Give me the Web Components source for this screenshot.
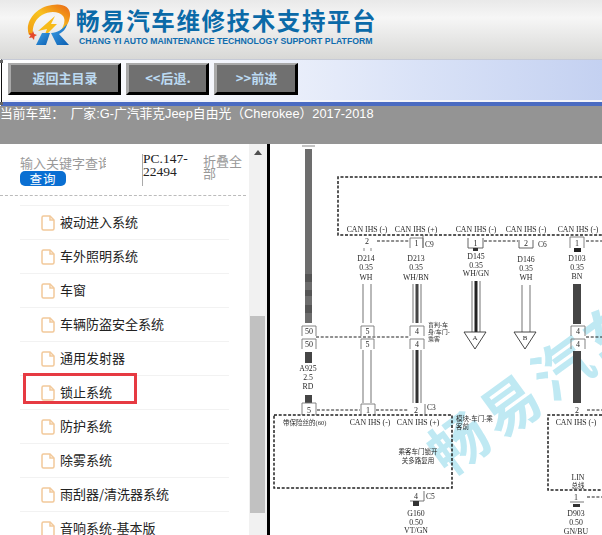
<!DOCTYPE html>
<html lang="zh"><head><meta charset="utf-8"><title>畅易汽车维修技术支持平台</title>
<style>
html,body{margin:0;padding:0;height:535px;overflow:hidden;background:#fff}
body{font-family:"Liberation Sans","Noto Sans CJK SC",sans-serif;display:flex;flex-direction:column}
</style></head><body>
<app-header></app-header>
<nav-bar>
  <nav-btn style="--w:113px">返回主目录</nav-btn>
  <nav-btn style="--w:83px">&lt;&lt;后退.</nav-btn>
  <nav-btn style="--w:84px">&gt;&gt;前进</nav-btn>
</nav-bar>
<car-bar>当前车型： 厂家:G-广汽菲克Jeep自由光（Cherokee）2017-2018</car-bar>
<main-area>
  <side-panel>
    <tree-item>被动进入系统</tree-item>
    <tree-item>车外照明系统</tree-item>
    <tree-item>车窗</tree-item>
    <tree-item>车辆防盗安全系统</tree-item>
    <tree-item>通用发射器</tree-item>
    <tree-item marked>锁止系统</tree-item>
    <tree-item>防护系统</tree-item>
    <tree-item>除雾系统</tree-item>
    <tree-item>雨刮器/清洗器系统</tree-item>
    <tree-item>音响系统-基本版</tree-item>
  </side-panel>
  <v-scroll></v-scroll>
  <wiring-view></wiring-view>
</main-area>
<script>
function def(name, css, html){
  customElements.define(name, class extends HTMLElement{
    constructor(){super();const r=this.attachShadow({mode:'open'});r.innerHTML='<style>'+css+'</style>'+html;}
  });
}
const logo=`<svg width="48" height="44" viewBox="25 3 48 44" aria-hidden="true" style="flex:none">
<defs><linearGradient id="o" x1="0" y1="1" x2="1" y2="0"><stop offset="0" stop-color="#f09a12"/><stop offset=".5" stop-color="#f8c320"/><stop offset=".8" stop-color="#f08a18"/><stop offset="1" stop-color="#e8661a"/></linearGradient>
<linearGradient id="b" x1="0" y1="0" x2="1" y2="1"><stop offset="0" stop-color="#3d9fe6"/><stop offset="1" stop-color="#0b5fb2"/></linearGradient></defs>
<path d="M29 35C24 22 36 7 52 5 63 3 71 7 70 16 69 24 65 29 60 32 64 26 66 20 63 16 59 11 49 11 42 15 35 19 32 27 33 34Z" fill="url(#o)"/>
<path d="M38 31 55 16 51 24 57 24 44 37 47 29Z" fill="#f7bb1a"/>
<path d="M36 45 42 33 50 33 46 45Z" fill="url(#b)"/>
<path d="M51 33C57 33 63 29 67 24 66 29 63 32 59 34L69 45 57 45Z" fill="url(#b)"/>
<path d="M33 31 34.200 34 37 35 34.500 36.500 34 40 32 37.500 29 38 30.500 35.500 29 33 32 33.500Z" fill="#e4482a"/>
</svg>`;
def('app-header',`:host{display:flex;height:59px;box-sizing:border-box;padding:3px 0 0 25px;gap:3px;background:linear-gradient(#e9e9e9,#f6f6f6 30%,#d8d8d6)}
.t{display:flex;flex-direction:column}
.c{font:700 23.500px/28px "Noto Sans CJK SC",sans-serif;letter-spacing:1.600px;color:#0b6aa8;white-space:nowrap;margin-top:3px}
.e{font:700 8.700px/11px "Liberation Sans",sans-serif;color:#0f6cae;white-space:nowrap;margin:2px 0 0 3px}`,
logo+`<div class="t"><div class="c">畅易汽车维修技术支持平台</div><div class="e">CHANG YI AUTO MAINTENANCE TECHNOLOGY SUPPORT PLATFORM</div></div>`);
def('nav-bar',`:host{display:flex;height:47px;box-sizing:border-box;padding:3px 0 0 6px;gap:5px;position:relative;margin-left:1px;
background:linear-gradient(90deg,#fff 0,#f4f6fc 35%,#d9e2f7 70%,#c4d1f1 100%);border-top:1px solid #c6cad6;border-bottom:4px solid #4a6bc2;border-left:1px solid #111;box-shadow:inset 0 -2px 0 #f2f4fb}
.h{position:absolute;left:-2px;width:3px;height:3px;background:#666}`,`<slot></slot><i class="h" style="top:0"></i><i class="h" style="bottom:-3px"></i>`);
def('nav-btn',`:host{display:flex;align-items:center;justify-content:center;box-sizing:border-box;width:var(--w);height:32px;padding:0 0 2px 1px;background:#707070;color:#bcdaf2;
font:700 13px/1 "Noto Sans CJK SC",sans-serif;border-style:solid;border-width:2px 3px 3px 3px;border-color:#a9a9a9 #000 #000 #a9a9a9}`,`<slot></slot>`);
def('car-bar',`:host{display:block;height:38px;box-sizing:border-box;background:#949494;color:#fff;font:12.800px/16px "Liberation Sans","Noto Sans CJK SC",sans-serif;word-spacing:3px;white-space:nowrap}`,`<slot></slot>`);
def('main-area',`:host{display:flex;flex:1;min-height:0;overflow:hidden}`,`<slot></slot>`);
def('side-panel',`:host{display:block;width:249px;flex:none;overflow:hidden;box-sizing:border-box;background:#fff}
.s{display:flex;height:52px;box-sizing:border-box;padding:8px 0 0 20px;border-bottom:1px dashed #bbb;width:246px}
.q{width:122px;flex:none;font:13px/14px "Noto Sans CJK SC",sans-serif}
.p{color:#999;width:86px;height:14px;overflow:hidden;white-space:nowrap;margin-top:4px}
.b{display:block;width:46px;height:15px;margin-top:1px;background:#0a6fd2;color:#fff;border-radius:5px;text-align:center;font-size:12.500px;line-height:15px;letter-spacing:1px}
.n{width:61px;flex:none;box-sizing:border-box;height:32px;border-left:1px solid #aaa;margin-top:2px;font:13.500px/12.500px "Liberation Serif",serif;color:#222}
.n span{position:relative;top:-1px}
.f{width:40px;color:#999;font:13px/11.500px "Noto Sans CJK SC",sans-serif;margin-top:3px}
.l{padding:9px 0 0 20px;width:209px}`,
`<div class="s"><div class="q"><div class="p">输入关键字查询</div><span class="b">查询</span></div><div class="n"><span>PC.147-<br>22494</span></div><div class="f">折叠全部</div></div><div class="l"><slot></slot></div>`);
def('tree-item',`:host{display:flex;align-items:center;gap:5px;height:34px;box-sizing:border-box;border-top:1px solid #f2f2f2;padding:0 0 3px 21px;font:13px/1 "Noto Sans CJK SC",sans-serif;color:#222;white-space:nowrap;position:relative}
svg{position:relative;top:1.500px}
.m{display:none;position:absolute;left:3px;top:-3px;width:114px;height:31px;box-sizing:border-box;border:3px solid #e63a42}
:host([marked]) .m{display:block}`,
`<svg width="14" height="16" viewBox="0 0 14 16" aria-hidden="true"><path d="M1 2.500A1.500 1.500 0 0 1 2.500 1H9l4 4v8.500a1.500 1.500 0 0 1-1.500 1.500h-9A1.500 1.500 0 0 1 1 13.500z" fill="#fff" stroke="#f2c99a" stroke-width="1.500"/><path d="M9 1v4h4" fill="none" stroke="#f2c99a" stroke-width="1.500"/></svg><slot></slot><i class="m"></i>`);
def('v-scroll',`:host{display:flex;flex-direction:column;width:18px;flex:none;background:#f1f1f1;box-sizing:border-box;padding:0 2px 0 1px}
.a{height:172px;flex:none;display:flex;justify-content:center;padding-top:6px;box-sizing:border-box}
.a i{width:0;height:0;border:4px solid transparent;border-top:0;border-bottom:5px solid #505050}
.t{height:197px;flex:none;background:#c1c1c1}`,`<div class="a"><i></i></div><div class="t"></div>`);
const T=(x,y,s,a='middle',sz=7.8)=>`<text x="${x}" y="${y}" text-anchor="${a}" font-size="${sz}">${s}</text>`;
const box=(x,y,w,h,n)=>`<path d="M${x} ${y+h}V${y}H${x+w}V${y+h}" fill="none" stroke="#777" stroke-width=".9"/>`+T(x+w/2,y+h-2.5,n,'middle',8);
const ubox=(x,y,w,h,n)=>`<path d="M${x} ${y}V${y+h}H${x+w}V${y}" fill="none" stroke="#555" stroke-width=".9"/>`+T(x+w/2,y+h-2.5,n,'middle',8);
const dash=(d,w=1.500)=>`<path d="${d}" fill="none" stroke="#222" stroke-width="${w}" stroke-dasharray="3 1.700"/>`;
const wire=(x,y1,y2,c)=>`<path d="M${x} ${y1}V${y2}M${x+8} ${y1}V${y2}" stroke="#a2a2a2" stroke-width="1.500"/>`+(c?`<rect x="${x+2.500}" y="${y1}" width="3" height="${y2-y1}" fill="${c}"/>`:'');
const tri=(x,l)=>`<path d="M${x-11} 332h22l-11 17z" fill="#fff" stroke="#333" stroke-width=".9"/>`+T(x,340,l,'middle',7);
const can=(x,y,s)=>T(x,y,'CAN IHS ('+s+')');
const svg=`<svg width="332" height="391" viewBox="270 144 332 391">
<defs><filter id="s" x="-5%" y="-5%" width="110%" height="110%"><feGaussianBlur stdDeviation=".35"/></filter></defs>
<g font-family="'Liberation Serif','Noto Sans CJK SC',serif" fill="#2a2a2a" filter="url(#s)">
<text transform="translate(448 478) rotate(-36)" font-family="'Noto Sans CJK SC',sans-serif" font-weight="700" font-size="58" letter-spacing="6" fill="#bfe9f3">畅易汽车</text>
<path d="M302 146H315" stroke="#888"/>
<rect x="305" y="149" width="7" height="174" fill="#6d6d6d"/><rect x="305" y="274" width="7" height="8" fill="#555"/><rect x="305" y="290" width="7" height="6" fill="#555"/><rect x="305" y="305" width="7" height="8" fill="#555"/>
${dash('M602 177H338V235H602')}
${can(367,232,'-')}${can(416,232,'+')}${can(476,232,'-')}${can(526,232,'-')}${can(578,232,'-')}
${T(367,244,'2','middle',8)}<path d="M364 248v3M371 248v3" stroke="#888"/>${dash('M377 241H409',1.200)}${box(410,238,13,10,'1')}<path d="M423 235V248" stroke="#666" stroke-width=".8"/>${T(425,247,'C9','start',7.500)}
${ubox(468,238,15,10,'1')}${dash('M484 241H518',1.200)}${ubox(519,240,14,8,'2')}${T(538,247,'C6','start',7.500)}
${box(570,237,14,11,'1')}${dash('M586 241H602',1.200)}<rect x="473" y="248" width="5" height="3" fill="#333"/><rect x="574" y="248" width="7" height="4" fill="#222"/>
${T(366,261,'D214')}${T(366,270,'0.35')}${T(366,280,'WH')}
${T(416,261,'D213')}${T(416,270,'0.35')}${T(416,280,'WH/BN')}
${T(476,259,'D145')}${T(476,268,'0.35')}${T(476,276,'WH/GN')}
${T(526,262,'D146')}${T(526,271,'0.35')}${T(526,280,'WH')}
${T(577,261,'D103')}${T(577,270,'0.35')}${T(577,279,'BN')}
${wire(363,284,323)}${wire(413,284,323,'#444')}${wire(472,281,332,'#222')}${wire(522,285,332)}
<rect x="573" y="284" width="8" height="40" fill="#444"/>
${tri(475,'A')}${tri(525,'B')}
${box(302,326,14,10,'50')}${box(361,326,13,10,'5')}${box(410,326,14,10,'4')}${box(571,326,14,10,'4')}
${T(428,327,'盲判-车','start',6)}${T(428,334,'身/车门-','start',6)}${T(428,341,'乘客','start',6)}
${dash('M316 337H410',1.200)}${dash('M586 337H602',1.200)}
${box(302,339,14,10,'50')}${box(361,339,13,10,'5')}${box(410,339,14,10,'4')}${box(571,339,14,10,'4')}
<rect x="305" y="352" width="7" height="11" fill="#444"/>${T(308,371,'A925')}${T(308,380,'2.5')}${T(308,389,'RD')}<rect x="305" y="395" width="7" height="8" fill="#444"/>
${wire(363,350,403)}${wire(413,350,403,'#333')}<rect x="573" y="351" width="8" height="52" fill="#444"/>
${box(302,403,14,12,'5')}${box(361,404,14,11,'1')}${T(416,413,'2','middle',8)}${T(427,410,'C3','start',7.500)}<path d="M425 404V414" stroke="#555" stroke-width=".8"/>
${dash('M317 410H360',1.200)}${dash('M376 410H408',1.200)}${T(577,413,'2','middle',8)}${dash('M587 410H602',1.200)}
${dash('M274 415H452V488H274Z')}${dash('M602 415H548V490H602')}
${T(283,425,'带保险丝的(60)','start',6.500)}${can(370,425,'-')}${can(418,425,'+')}
${T(418,454,'乘客车门锁开','middle',6.500)}${T(418,463,'关多路复用','middle',6.500)}
${T(456,421,'模块-车门-乘','start',6.500)}${T(456,429,'客前','start',6.500)}
${can(576,425,'-')}${T(578,480,'LIN')}${T(578,488,'总线','middle',6.500)}
${T(416,499,'4','middle',8)}<path d="M410 501H424M424 491V501" stroke="#555" stroke-width=".8" fill="none"/>${T(426,499,'C5','start',7.500)}<rect x="413" y="501" width="6" height="5" fill="#333"/>
${T(416,516,'G160')}${T(416,525,'0.50')}${T(416,533,'VT/GN')}
${T(576,500,'1','middle',8)}<path d="M570 502H584" stroke="#555" stroke-width=".8"/>${dash('M587 497H602',1.200)}<rect x="573" y="504" width="7" height="3" fill="#333"/>
${T(576,516,'D903')}${T(576,525,'0.50')}${T(576,534,'GN/BU')}
</g></svg>`;
def('wiring-view',`:host{display:block;flex:1;min-width:0;overflow:hidden;background:#fff;border-left:3px solid #000}
svg{display:block}`,svg);
</script>
</body></html>
